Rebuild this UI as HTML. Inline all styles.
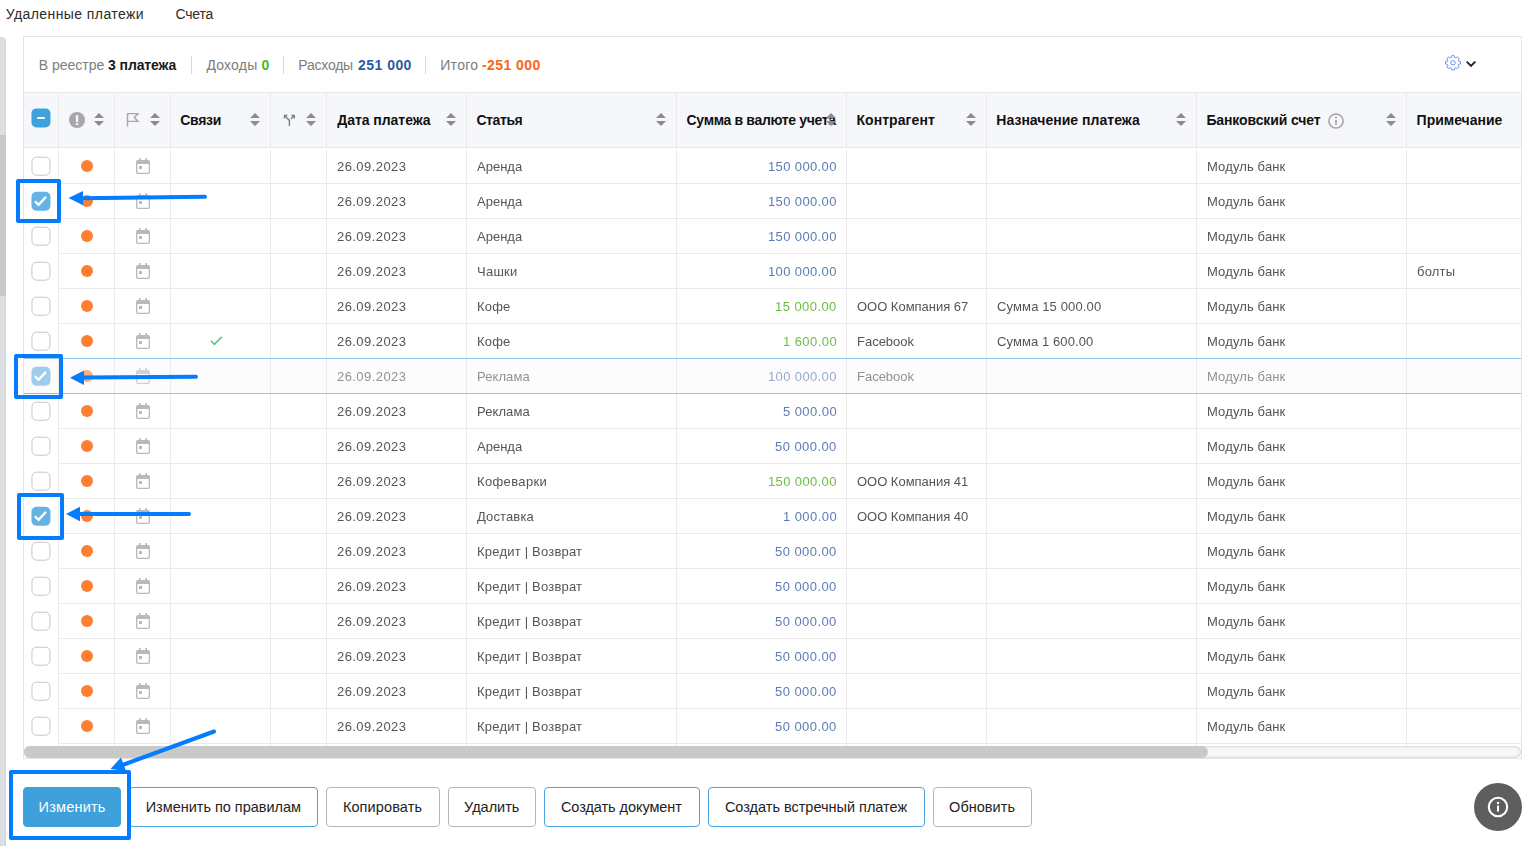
<!DOCTYPE html>
<html lang="ru">
<head>
<meta charset="utf-8">
<title>Реестр платежей</title>
<style>
*{box-sizing:border-box;margin:0;padding:0}
html,body{width:1538px;height:846px;overflow:hidden;background:#fff}
body{position:relative;font-family:"Liberation Sans",sans-serif;font-size:13px;color:#4a4a4a}
.abs{position:absolute}
.tab{position:absolute;top:6px;font-size:14px;color:#2b2b2b;line-height:16px;white-space:nowrap}
.strip{position:absolute;left:0;width:6px}
.panel{position:absolute;left:23px;top:36px;width:1499px;height:723px;border:1px solid #e4e4e4;background:#fff}
.thead{position:absolute;left:24px;top:92px;width:1497px;height:56px;background:#f6f7fb;border-top:1px solid #e6e7ec;border-bottom:1px solid #e6e7ec}
.vl{position:absolute;width:1px;background:#ebebeb}
.hl{position:absolute;height:1px;background:#ebebeb;left:59px;width:1462px}
.h{position:absolute;top:112px;font-weight:bold;font-size:14px;color:#111;line-height:16px;white-space:nowrap}
.c{position:absolute;white-space:nowrap;line-height:16px;font-size:13px;color:#555;will-change:transform}
.blue{color:#5b7db4}
.green{color:#6abf45}
.cb{position:absolute;left:31px;width:19px;height:19px;border:1.5px solid #c6c6c6;border-radius:5px;background:#fff;transform:translate(.45px,-.3px)}
.cb.on{border:none;background:#66b3e3}
.dot{position:absolute;left:81px;width:12px;height:12px;border-radius:50%;background:#ff7f32}
.btn{position:absolute;top:787px;height:40px;border-radius:4px;border:1px solid #b5b5b5;background:#fff}
.btn.pri{background:#3ea1dc;border-color:#3ea1dc}
.btn.bl{border-color:#4aa5e2}
.bt{position:absolute;top:799px;font-size:14.5px;line-height:16px;color:#222;white-space:nowrap}
.sum{position:absolute;top:57px;font-size:14px;line-height:16px;white-space:nowrap;color:#7d7d7d}
.sum.b{font-weight:bold}
.sep{position:absolute;top:56px;width:1px;height:18px;background:#d9d9d9}
.faded{opacity:.64}
svg{position:absolute;overflow:visible}
</style>
</head>
<body>

<div class="tab" style="left:5.7px;letter-spacing:0.42px">Удаленные платежи</div>
<div class="tab" style="left:175.4px;letter-spacing:-0.15px">Счета</div>
<div class="strip" style="top:37px;height:809px;background:linear-gradient(90deg,#d9dce0 0,#dfe2e5 60%,#cfd2d6 100%);border-radius:0 4px 0 0"></div>
<div class="strip" style="top:135px;height:161px;background:#c8c8c8"></div>
<div class="panel"></div>
<div class="sum" style="left:38.7px;letter-spacing:0px">В реестре</div>
<div class="sum b" style="left:108.1px;letter-spacing:-0.11px;color:#1a1a1a">3 платежа</div>
<div class="sep" style="left:191px"></div>
<div class="sum" style="left:206.4px;letter-spacing:0.2px">Доходы</div>
<div class="sum b" style="left:261.4px;letter-spacing:0px;color:#4fb81e">0</div>
<div class="sep" style="left:283px"></div>
<div class="sum" style="left:298.3px;letter-spacing:-0.23px">Расходы</div>
<div class="sum b" style="left:358.1px;letter-spacing:0.45px;color:#2c5aa5">251 000</div>
<div class="sep" style="left:425px"></div>
<div class="sum" style="left:440.2px;letter-spacing:0.32px">Итого</div>
<div class="sum b" style="left:481.9px;letter-spacing:0.43px;color:#fb6514">-251 000</div>
<svg style="left:1445.1px;top:55.4px" width="16" height="16" viewBox="0 0 16 16"><path d="M6.42 2.40 L6.75 0.68 L9.25 0.68 L9.58 2.40 L10.91 2.92 L12.41 1.92 L14.19 3.61 L13.14 5.04 L13.69 6.30 L15.50 6.61 L15.50 8.99 L13.69 9.30 L13.14 10.56 L14.19 11.99 L12.41 13.68 L10.91 12.68 L9.58 13.20 L9.25 14.92 L6.75 14.92 L6.42 13.20 L5.09 12.68 L3.59 13.68 L1.81 11.99 L2.86 10.56 L2.31 9.30 L0.50 8.99 L0.50 6.61 L2.31 6.30 L2.86 5.04 L1.81 3.61 L3.59 1.92 L5.09 2.92 Z" fill="none" stroke="#6488ff" stroke-width=".95" stroke-linejoin="round"/><ellipse cx="8" cy="7.8" rx="2.25" ry="2.15" fill="none" stroke="#6488ff" stroke-width=".95"/></svg>
<svg style="left:1465px;top:59px" width="12" height="10" viewBox="0 0 12 10"><path d="M1.7 2.6 L6 6.9 L10.3 2.6" fill="none" stroke="#222" stroke-width="1.9"/></svg>
<div class="thead"></div>
<div class="abs" style="left:31px;top:108px;width:19px;height:19px;border-radius:5px;background:#3ea1dc;transform:translate(.45px,.4px)"></div><div class="abs" style="left:37px;top:117px;width:8px;height:2px;background:#fff;border-radius:1px"></div>
<svg style="left:69px;top:112px" width="16" height="16" viewBox="0 0 16 16"><circle cx="8" cy="8" r="8" fill="#a8a8a8"/><rect x="6.9" y="3.1" width="2.3" height="7" fill="#f6f7fb"/><rect x="6.9" y="11.2" width="2.3" height="1.9" fill="#f6f7fb"/></svg>
<svg style="left:94px;top:113px" width="10" height="13" viewBox="0 0 10 13"><path d="M5 0 L10 5 L0 5 Z M0 8 L10 8 L5 13 Z" fill="#8b8b92"/></svg>
<svg style="left:125.9px;top:112.3px" width="14" height="15" viewBox="0 0 14 15"><path d="M1.5 14.6 V1.6 H12 L8.3 5.5 L12 9.4 H1.5" fill="none" stroke="#a8a8a8" stroke-width="1.4"/></svg>
<svg style="left:150px;top:113px" width="10" height="13" viewBox="0 0 10 13"><path d="M5 0 L10 5 L0 5 Z M0 8 L10 8 L5 13 Z" fill="#8b8b92"/></svg>
<div class="h" style="left:180.3px;letter-spacing:-0.3px">Связи</div>
<svg style="left:250px;top:113px" width="10" height="13" viewBox="0 0 10 13"><path d="M5 0 L10 5 L0 5 Z M0 8 L10 8 L5 13 Z" fill="#8b8b92"/></svg>
<svg style="left:281px;top:111.6px" width="16.8" height="16.8" viewBox="0 0 24 24"><path d="M14 4l2.29 2.29-2.88 2.88 1.42 1.42 2.88-2.88L20 10V4zm-4 0H4v6l2.29-2.29 4.71 4.7V20h2v-8.41l-5.29-5.3z" fill="#7b7e8a"/></svg>
<svg style="left:306px;top:113px" width="10" height="13" viewBox="0 0 10 13"><path d="M5 0 L10 5 L0 5 Z M0 8 L10 8 L5 13 Z" fill="#8b8b92"/></svg>
<div class="h" style="left:337.3px;letter-spacing:-0.05px">Дата платежа</div>
<svg style="left:446px;top:113px" width="10" height="13" viewBox="0 0 10 13"><path d="M5 0 L10 5 L0 5 Z M0 8 L10 8 L5 13 Z" fill="#8b8b92"/></svg>
<div class="h" style="left:476.4px;letter-spacing:-0.4px">Статья</div>
<svg style="left:656px;top:113px" width="10" height="13" viewBox="0 0 10 13"><path d="M5 0 L10 5 L0 5 Z M0 8 L10 8 L5 13 Z" fill="#8b8b92"/></svg>
<div class="h" style="left:686.6px;letter-spacing:-0.33px">Сумма в валюте учета</div>
<svg style="left:826px;top:113px" width="10" height="13" viewBox="0 0 10 13"><path d="M5 0 L10 5 L0 5 Z M0 8 L10 8 L5 13 Z" fill="#8b8b92"/></svg>
<div class="h" style="left:856.4px;letter-spacing:0.08px">Контрагент</div>
<svg style="left:966px;top:113px" width="10" height="13" viewBox="0 0 10 13"><path d="M5 0 L10 5 L0 5 Z M0 8 L10 8 L5 13 Z" fill="#8b8b92"/></svg>
<div class="h" style="left:996.3px;letter-spacing:0.02px">Назначение платежа</div>
<svg style="left:1176px;top:113px" width="10" height="13" viewBox="0 0 10 13"><path d="M5 0 L10 5 L0 5 Z M0 8 L10 8 L5 13 Z" fill="#8b8b92"/></svg>
<div class="h" style="left:1206.4px;letter-spacing:-0.11px">Банковский счет</div>
<svg style="left:1328px;top:112.5px" width="16" height="16" viewBox="0 0 16 16"><circle cx="8" cy="8" r="7.1" fill="none" stroke="#a2a2a2" stroke-width="1.5"/><rect x="7.2" y="6.8" width="1.6" height="5" fill="#a2a2a2"/><circle cx="8" cy="4.6" r="1" fill="#a2a2a2"/></svg>
<svg style="left:1386px;top:113px" width="10" height="13" viewBox="0 0 10 13"><path d="M5 0 L10 5 L0 5 Z M0 8 L10 8 L5 13 Z" fill="#8b8b92"/></svg>
<div class="h" style="left:1416.6px;letter-spacing:0px">Примечание</div>
<div class="vl" style="left:58px;top:93px;height:54px"></div>
<div class="vl" style="left:58px;top:149px;height:597px"></div>
<div class="vl" style="left:114px;top:93px;height:54px"></div>
<div class="vl" style="left:114px;top:149px;height:597px"></div>
<div class="vl" style="left:170px;top:93px;height:54px"></div>
<div class="vl" style="left:170px;top:149px;height:597px"></div>
<div class="vl" style="left:270px;top:93px;height:54px"></div>
<div class="vl" style="left:270px;top:149px;height:597px"></div>
<div class="vl" style="left:326px;top:93px;height:54px"></div>
<div class="vl" style="left:326px;top:149px;height:597px"></div>
<div class="vl" style="left:466px;top:93px;height:54px"></div>
<div class="vl" style="left:466px;top:149px;height:597px"></div>
<div class="vl" style="left:676px;top:93px;height:54px"></div>
<div class="vl" style="left:676px;top:149px;height:597px"></div>
<div class="vl" style="left:846px;top:93px;height:54px"></div>
<div class="vl" style="left:846px;top:149px;height:597px"></div>
<div class="vl" style="left:986px;top:93px;height:54px"></div>
<div class="vl" style="left:986px;top:149px;height:597px"></div>
<div class="vl" style="left:1196px;top:93px;height:54px"></div>
<div class="vl" style="left:1196px;top:149px;height:597px"></div>
<div class="vl" style="left:1406px;top:93px;height:54px"></div>
<div class="vl" style="left:1406px;top:149px;height:597px"></div>
<div class="hl" style="top:183px"></div>
<div class="cb" style="top:156.5px"></div>
<div class="dot" style="top:160px"></div>
<svg style="left:136px;top:158px" width="14" height="16" viewBox="0 0 14 16"><path d="M3 0 h1.6 v2 h4.8 v-2 h1.6 v2 h1 a2 2 0 0 1 2 2 v10 a2 2 0 0 1 -2 2 h-10 a2 2 0 0 1 -2 -2 v-10 a2 2 0 0 1 2 -2 h1 z M1.3 6 v7.9 a.8 .8 0 0 0 .8 .8 h9.8 a.8 .8 0 0 0 .8 -.8 v-7.9 z" fill="#b9b9b9" fill-rule="evenodd"/><rect x="3" y="8" width="3" height="3" fill="#b9b9b9"/></svg>
<div class="c" style="top:159px;left:336.9px;letter-spacing:0.43px">26.09.2023</div>
<div class="c" style="top:159px;left:477px;letter-spacing:0px">Аренда</div>
<div class="c blue" style="top:159px;left:767.5px;letter-spacing:0.37px">150 000.00</div>
<div class="c" style="top:159px;left:1206.9px;letter-spacing:0.13px">Модуль банк</div>
<div class="hl" style="top:218px"></div>
<div class="cb on" style="top:191.5px"></div><svg style="left:31.45px;top:191.2px" width="19" height="19" viewBox="0 0 19 19"><path d="M3.9 10.3 L7.5 13.8 L15 5.9" fill="none" stroke="#fff" stroke-width="2.3"/></svg>
<div class="dot" style="top:195px"></div>
<svg style="left:136px;top:193px" width="14" height="16" viewBox="0 0 14 16"><path d="M3 0 h1.6 v2 h4.8 v-2 h1.6 v2 h1 a2 2 0 0 1 2 2 v10 a2 2 0 0 1 -2 2 h-10 a2 2 0 0 1 -2 -2 v-10 a2 2 0 0 1 2 -2 h1 z M1.3 6 v7.9 a.8 .8 0 0 0 .8 .8 h9.8 a.8 .8 0 0 0 .8 -.8 v-7.9 z" fill="#b9b9b9" fill-rule="evenodd"/><rect x="3" y="8" width="3" height="3" fill="#b9b9b9"/></svg>
<div class="c" style="top:194px;left:336.9px;letter-spacing:0.43px">26.09.2023</div>
<div class="c" style="top:194px;left:477px;letter-spacing:0px">Аренда</div>
<div class="c blue" style="top:194px;left:767.5px;letter-spacing:0.37px">150 000.00</div>
<div class="c" style="top:194px;left:1206.9px;letter-spacing:0.13px">Модуль банк</div>
<div class="hl" style="top:253px"></div>
<div class="cb" style="top:226.5px"></div>
<div class="dot" style="top:230px"></div>
<svg style="left:136px;top:228px" width="14" height="16" viewBox="0 0 14 16"><path d="M3 0 h1.6 v2 h4.8 v-2 h1.6 v2 h1 a2 2 0 0 1 2 2 v10 a2 2 0 0 1 -2 2 h-10 a2 2 0 0 1 -2 -2 v-10 a2 2 0 0 1 2 -2 h1 z M1.3 6 v7.9 a.8 .8 0 0 0 .8 .8 h9.8 a.8 .8 0 0 0 .8 -.8 v-7.9 z" fill="#b9b9b9" fill-rule="evenodd"/><rect x="3" y="8" width="3" height="3" fill="#b9b9b9"/></svg>
<div class="c" style="top:229px;left:336.9px;letter-spacing:0.43px">26.09.2023</div>
<div class="c" style="top:229px;left:477px;letter-spacing:0px">Аренда</div>
<div class="c blue" style="top:229px;left:767.5px;letter-spacing:0.37px">150 000.00</div>
<div class="c" style="top:229px;left:1206.9px;letter-spacing:0.13px">Модуль банк</div>
<div class="hl" style="top:288px"></div>
<div class="cb" style="top:261.5px"></div>
<div class="dot" style="top:265px"></div>
<svg style="left:136px;top:263px" width="14" height="16" viewBox="0 0 14 16"><path d="M3 0 h1.6 v2 h4.8 v-2 h1.6 v2 h1 a2 2 0 0 1 2 2 v10 a2 2 0 0 1 -2 2 h-10 a2 2 0 0 1 -2 -2 v-10 a2 2 0 0 1 2 -2 h1 z M1.3 6 v7.9 a.8 .8 0 0 0 .8 .8 h9.8 a.8 .8 0 0 0 .8 -.8 v-7.9 z" fill="#b9b9b9" fill-rule="evenodd"/><rect x="3" y="8" width="3" height="3" fill="#b9b9b9"/></svg>
<div class="c" style="top:264px;left:336.9px;letter-spacing:0.43px">26.09.2023</div>
<div class="c" style="top:264px;left:477.4px;letter-spacing:0.25px">Чашки</div>
<div class="c blue" style="top:264px;left:767.5px;letter-spacing:0.37px">100 000.00</div>
<div class="c" style="top:264px;left:1206.9px;letter-spacing:0.13px">Модуль банк</div>
<div class="c" style="top:264px;left:1416.8px;letter-spacing:0.18px">болты</div>
<div class="hl" style="top:323px"></div>
<div class="cb" style="top:296.5px"></div>
<div class="dot" style="top:300px"></div>
<svg style="left:136px;top:298px" width="14" height="16" viewBox="0 0 14 16"><path d="M3 0 h1.6 v2 h4.8 v-2 h1.6 v2 h1 a2 2 0 0 1 2 2 v10 a2 2 0 0 1 -2 2 h-10 a2 2 0 0 1 -2 -2 v-10 a2 2 0 0 1 2 -2 h1 z M1.3 6 v7.9 a.8 .8 0 0 0 .8 .8 h9.8 a.8 .8 0 0 0 .8 -.8 v-7.9 z" fill="#b9b9b9" fill-rule="evenodd"/><rect x="3" y="8" width="3" height="3" fill="#b9b9b9"/></svg>
<div class="c" style="top:299px;left:336.9px;letter-spacing:0.43px">26.09.2023</div>
<div class="c" style="top:299px;left:477.1px;letter-spacing:0.17px">Кофе</div>
<div class="c green" style="top:299px;left:774.7px;letter-spacing:0.44px">15 000.00</div>
<div class="c" style="top:299px;left:856.7px;letter-spacing:-0.02px">ООО Компания 67</div>
<div class="c" style="top:299px;left:996.8px;letter-spacing:0.13px">Сумма 15 000.00</div>
<div class="c" style="top:299px;left:1206.9px;letter-spacing:0.13px">Модуль банк</div>
<div class="hl" style="top:358px"></div>
<div class="cb" style="top:331.5px"></div>
<div class="dot" style="top:335px"></div>
<svg style="left:136px;top:333px" width="14" height="16" viewBox="0 0 14 16"><path d="M3 0 h1.6 v2 h4.8 v-2 h1.6 v2 h1 a2 2 0 0 1 2 2 v10 a2 2 0 0 1 -2 2 h-10 a2 2 0 0 1 -2 -2 v-10 a2 2 0 0 1 2 -2 h1 z M1.3 6 v7.9 a.8 .8 0 0 0 .8 .8 h9.8 a.8 .8 0 0 0 .8 -.8 v-7.9 z" fill="#b9b9b9" fill-rule="evenodd"/><rect x="3" y="8" width="3" height="3" fill="#b9b9b9"/></svg>
<svg style="left:210px;top:336px" width="12" height="10" viewBox="0 0 12 10"><path d="M.9 4.8 L4.4 8.3 L11.8 .9" fill="none" stroke="#52c687" stroke-width="1.55"/></svg>
<div class="c" style="top:334px;left:336.9px;letter-spacing:0.43px">26.09.2023</div>
<div class="c" style="top:334px;left:477.1px;letter-spacing:0.17px">Кофе</div>
<div class="c green" style="top:334px;left:782.8px;letter-spacing:0.43px">1 600.00</div>
<div class="c" style="top:334px;left:857.1px;letter-spacing:-0.01px">Facebook</div>
<div class="c" style="top:334px;left:996.8px;letter-spacing:0.09px">Сумма 1 600.00</div>
<div class="c" style="top:334px;left:1206.9px;letter-spacing:0.13px">Модуль банк</div>
<div class="abs" style="left:24px;top:358px;width:1497px;height:36px;background:#fcfcfc;border-top:1px solid #8fc6ec;border-bottom:1px solid #8fc6ec"></div>
<div class="vl" style="left:58px;top:359px;height:34px"></div>
<div class="vl" style="left:114px;top:359px;height:34px"></div>
<div class="vl" style="left:170px;top:359px;height:34px"></div>
<div class="vl" style="left:270px;top:359px;height:34px"></div>
<div class="vl" style="left:326px;top:359px;height:34px"></div>
<div class="vl" style="left:466px;top:359px;height:34px"></div>
<div class="vl" style="left:676px;top:359px;height:34px"></div>
<div class="vl" style="left:846px;top:359px;height:34px"></div>
<div class="vl" style="left:986px;top:359px;height:34px"></div>
<div class="vl" style="left:1196px;top:359px;height:34px"></div>
<div class="vl" style="left:1406px;top:359px;height:34px"></div>
<div class="cb on faded" style="top:366.5px"></div><svg style="left:31.45px;top:366.2px" width="19" height="19" viewBox="0 0 19 19"><path d="M3.9 10.3 L7.5 13.8 L15 5.9" fill="none" stroke="#fff" stroke-width="2.3"/></svg>
<div class="dot faded" style="top:370px"></div>
<svg class="faded" style="left:136px;top:368px" width="14" height="16" viewBox="0 0 14 16"><path d="M3 0 h1.6 v2 h4.8 v-2 h1.6 v2 h1 a2 2 0 0 1 2 2 v10 a2 2 0 0 1 -2 2 h-10 a2 2 0 0 1 -2 -2 v-10 a2 2 0 0 1 2 -2 h1 z M1.3 6 v7.9 a.8 .8 0 0 0 .8 .8 h9.8 a.8 .8 0 0 0 .8 -.8 v-7.9 z" fill="#b9b9b9" fill-rule="evenodd"/><rect x="3" y="8" width="3" height="3" fill="#b9b9b9"/></svg>
<div class="c faded" style="top:369px;left:336.9px;letter-spacing:0.43px">26.09.2023</div>
<div class="c faded" style="top:369px;left:476.9px;letter-spacing:0.08px">Реклама</div>
<div class="c blue faded" style="top:369px;left:767.5px;letter-spacing:0.37px">100 000.00</div>
<div class="c faded" style="top:369px;left:857.1px;letter-spacing:-0.01px">Facebook</div>
<div class="c faded" style="top:369px;left:1206.9px;letter-spacing:0.13px">Модуль банк</div>
<div class="hl" style="top:428px"></div>
<div class="cb" style="top:401.5px"></div>
<div class="dot" style="top:405px"></div>
<svg style="left:136px;top:403px" width="14" height="16" viewBox="0 0 14 16"><path d="M3 0 h1.6 v2 h4.8 v-2 h1.6 v2 h1 a2 2 0 0 1 2 2 v10 a2 2 0 0 1 -2 2 h-10 a2 2 0 0 1 -2 -2 v-10 a2 2 0 0 1 2 -2 h1 z M1.3 6 v7.9 a.8 .8 0 0 0 .8 .8 h9.8 a.8 .8 0 0 0 .8 -.8 v-7.9 z" fill="#b9b9b9" fill-rule="evenodd"/><rect x="3" y="8" width="3" height="3" fill="#b9b9b9"/></svg>
<div class="c" style="top:404px;left:336.9px;letter-spacing:0.43px">26.09.2023</div>
<div class="c" style="top:404px;left:476.9px;letter-spacing:0.08px">Реклама</div>
<div class="c blue" style="top:404px;left:782.8px;letter-spacing:0.43px">5 000.00</div>
<div class="c" style="top:404px;left:1206.9px;letter-spacing:0.13px">Модуль банк</div>
<div class="hl" style="top:463px"></div>
<div class="cb" style="top:436.5px"></div>
<div class="dot" style="top:440px"></div>
<svg style="left:136px;top:438px" width="14" height="16" viewBox="0 0 14 16"><path d="M3 0 h1.6 v2 h4.8 v-2 h1.6 v2 h1 a2 2 0 0 1 2 2 v10 a2 2 0 0 1 -2 2 h-10 a2 2 0 0 1 -2 -2 v-10 a2 2 0 0 1 2 -2 h1 z M1.3 6 v7.9 a.8 .8 0 0 0 .8 .8 h9.8 a.8 .8 0 0 0 .8 -.8 v-7.9 z" fill="#b9b9b9" fill-rule="evenodd"/><rect x="3" y="8" width="3" height="3" fill="#b9b9b9"/></svg>
<div class="c" style="top:439px;left:336.9px;letter-spacing:0.43px">26.09.2023</div>
<div class="c" style="top:439px;left:477px;letter-spacing:0px">Аренда</div>
<div class="c blue" style="top:439px;left:774.7px;letter-spacing:0.44px">50 000.00</div>
<div class="c" style="top:439px;left:1206.9px;letter-spacing:0.13px">Модуль банк</div>
<div class="hl" style="top:498px"></div>
<div class="cb" style="top:471.5px"></div>
<div class="dot" style="top:475px"></div>
<svg style="left:136px;top:473px" width="14" height="16" viewBox="0 0 14 16"><path d="M3 0 h1.6 v2 h4.8 v-2 h1.6 v2 h1 a2 2 0 0 1 2 2 v10 a2 2 0 0 1 -2 2 h-10 a2 2 0 0 1 -2 -2 v-10 a2 2 0 0 1 2 -2 h1 z M1.3 6 v7.9 a.8 .8 0 0 0 .8 .8 h9.8 a.8 .8 0 0 0 .8 -.8 v-7.9 z" fill="#b9b9b9" fill-rule="evenodd"/><rect x="3" y="8" width="3" height="3" fill="#b9b9b9"/></svg>
<div class="c" style="top:474px;left:336.9px;letter-spacing:0.43px">26.09.2023</div>
<div class="c" style="top:474px;left:476.9px;letter-spacing:0.36px">Кофеварки</div>
<div class="c green" style="top:474px;left:767.5px;letter-spacing:0.37px">150 000.00</div>
<div class="c" style="top:474px;left:856.7px;letter-spacing:-0.02px">ООО Компания 41</div>
<div class="c" style="top:474px;left:1206.9px;letter-spacing:0.13px">Модуль банк</div>
<div class="hl" style="top:533px"></div>
<div class="cb on" style="top:506.5px"></div><svg style="left:31.45px;top:506.2px" width="19" height="19" viewBox="0 0 19 19"><path d="M3.9 10.3 L7.5 13.8 L15 5.9" fill="none" stroke="#fff" stroke-width="2.3"/></svg>
<div class="dot" style="top:510px"></div>
<svg style="left:136px;top:508px" width="14" height="16" viewBox="0 0 14 16"><path d="M3 0 h1.6 v2 h4.8 v-2 h1.6 v2 h1 a2 2 0 0 1 2 2 v10 a2 2 0 0 1 -2 2 h-10 a2 2 0 0 1 -2 -2 v-10 a2 2 0 0 1 2 -2 h1 z M1.3 6 v7.9 a.8 .8 0 0 0 .8 .8 h9.8 a.8 .8 0 0 0 .8 -.8 v-7.9 z" fill="#b9b9b9" fill-rule="evenodd"/><rect x="3" y="8" width="3" height="3" fill="#b9b9b9"/></svg>
<div class="c" style="top:509px;left:336.9px;letter-spacing:0.43px">26.09.2023</div>
<div class="c" style="top:509px;left:477px;letter-spacing:0.13px">Доставка</div>
<div class="c blue" style="top:509px;left:782.8px;letter-spacing:0.43px">1 000.00</div>
<div class="c" style="top:509px;left:856.7px;letter-spacing:-0.02px">ООО Компания 40</div>
<div class="c" style="top:509px;left:1206.9px;letter-spacing:0.13px">Модуль банк</div>
<div class="hl" style="top:568px"></div>
<div class="cb" style="top:541.5px"></div>
<div class="dot" style="top:545px"></div>
<svg style="left:136px;top:543px" width="14" height="16" viewBox="0 0 14 16"><path d="M3 0 h1.6 v2 h4.8 v-2 h1.6 v2 h1 a2 2 0 0 1 2 2 v10 a2 2 0 0 1 -2 2 h-10 a2 2 0 0 1 -2 -2 v-10 a2 2 0 0 1 2 -2 h1 z M1.3 6 v7.9 a.8 .8 0 0 0 .8 .8 h9.8 a.8 .8 0 0 0 .8 -.8 v-7.9 z" fill="#b9b9b9" fill-rule="evenodd"/><rect x="3" y="8" width="3" height="3" fill="#b9b9b9"/></svg>
<div class="c" style="top:544px;left:336.9px;letter-spacing:0.43px">26.09.2023</div>
<div class="c" style="top:544px;left:476.9px;letter-spacing:0.21px">Кредит | Возврат</div>
<div class="c blue" style="top:544px;left:774.7px;letter-spacing:0.44px">50 000.00</div>
<div class="c" style="top:544px;left:1206.9px;letter-spacing:0.13px">Модуль банк</div>
<div class="hl" style="top:603px"></div>
<div class="cb" style="top:576.5px"></div>
<div class="dot" style="top:580px"></div>
<svg style="left:136px;top:578px" width="14" height="16" viewBox="0 0 14 16"><path d="M3 0 h1.6 v2 h4.8 v-2 h1.6 v2 h1 a2 2 0 0 1 2 2 v10 a2 2 0 0 1 -2 2 h-10 a2 2 0 0 1 -2 -2 v-10 a2 2 0 0 1 2 -2 h1 z M1.3 6 v7.9 a.8 .8 0 0 0 .8 .8 h9.8 a.8 .8 0 0 0 .8 -.8 v-7.9 z" fill="#b9b9b9" fill-rule="evenodd"/><rect x="3" y="8" width="3" height="3" fill="#b9b9b9"/></svg>
<div class="c" style="top:579px;left:336.9px;letter-spacing:0.43px">26.09.2023</div>
<div class="c" style="top:579px;left:476.9px;letter-spacing:0.21px">Кредит | Возврат</div>
<div class="c blue" style="top:579px;left:774.7px;letter-spacing:0.44px">50 000.00</div>
<div class="c" style="top:579px;left:1206.9px;letter-spacing:0.13px">Модуль банк</div>
<div class="hl" style="top:638px"></div>
<div class="cb" style="top:611.5px"></div>
<div class="dot" style="top:615px"></div>
<svg style="left:136px;top:613px" width="14" height="16" viewBox="0 0 14 16"><path d="M3 0 h1.6 v2 h4.8 v-2 h1.6 v2 h1 a2 2 0 0 1 2 2 v10 a2 2 0 0 1 -2 2 h-10 a2 2 0 0 1 -2 -2 v-10 a2 2 0 0 1 2 -2 h1 z M1.3 6 v7.9 a.8 .8 0 0 0 .8 .8 h9.8 a.8 .8 0 0 0 .8 -.8 v-7.9 z" fill="#b9b9b9" fill-rule="evenodd"/><rect x="3" y="8" width="3" height="3" fill="#b9b9b9"/></svg>
<div class="c" style="top:614px;left:336.9px;letter-spacing:0.43px">26.09.2023</div>
<div class="c" style="top:614px;left:476.9px;letter-spacing:0.21px">Кредит | Возврат</div>
<div class="c blue" style="top:614px;left:774.7px;letter-spacing:0.44px">50 000.00</div>
<div class="c" style="top:614px;left:1206.9px;letter-spacing:0.13px">Модуль банк</div>
<div class="hl" style="top:673px"></div>
<div class="cb" style="top:646.5px"></div>
<div class="dot" style="top:650px"></div>
<svg style="left:136px;top:648px" width="14" height="16" viewBox="0 0 14 16"><path d="M3 0 h1.6 v2 h4.8 v-2 h1.6 v2 h1 a2 2 0 0 1 2 2 v10 a2 2 0 0 1 -2 2 h-10 a2 2 0 0 1 -2 -2 v-10 a2 2 0 0 1 2 -2 h1 z M1.3 6 v7.9 a.8 .8 0 0 0 .8 .8 h9.8 a.8 .8 0 0 0 .8 -.8 v-7.9 z" fill="#b9b9b9" fill-rule="evenodd"/><rect x="3" y="8" width="3" height="3" fill="#b9b9b9"/></svg>
<div class="c" style="top:649px;left:336.9px;letter-spacing:0.43px">26.09.2023</div>
<div class="c" style="top:649px;left:476.9px;letter-spacing:0.21px">Кредит | Возврат</div>
<div class="c blue" style="top:649px;left:774.7px;letter-spacing:0.44px">50 000.00</div>
<div class="c" style="top:649px;left:1206.9px;letter-spacing:0.13px">Модуль банк</div>
<div class="hl" style="top:708px"></div>
<div class="cb" style="top:681.5px"></div>
<div class="dot" style="top:685px"></div>
<svg style="left:136px;top:683px" width="14" height="16" viewBox="0 0 14 16"><path d="M3 0 h1.6 v2 h4.8 v-2 h1.6 v2 h1 a2 2 0 0 1 2 2 v10 a2 2 0 0 1 -2 2 h-10 a2 2 0 0 1 -2 -2 v-10 a2 2 0 0 1 2 -2 h1 z M1.3 6 v7.9 a.8 .8 0 0 0 .8 .8 h9.8 a.8 .8 0 0 0 .8 -.8 v-7.9 z" fill="#b9b9b9" fill-rule="evenodd"/><rect x="3" y="8" width="3" height="3" fill="#b9b9b9"/></svg>
<div class="c" style="top:684px;left:336.9px;letter-spacing:0.43px">26.09.2023</div>
<div class="c" style="top:684px;left:476.9px;letter-spacing:0.21px">Кредит | Возврат</div>
<div class="c blue" style="top:684px;left:774.7px;letter-spacing:0.44px">50 000.00</div>
<div class="c" style="top:684px;left:1206.9px;letter-spacing:0.13px">Модуль банк</div>
<div class="hl" style="top:743px"></div>
<div class="cb" style="top:716.5px"></div>
<div class="dot" style="top:720px"></div>
<svg style="left:136px;top:718px" width="14" height="16" viewBox="0 0 14 16"><path d="M3 0 h1.6 v2 h4.8 v-2 h1.6 v2 h1 a2 2 0 0 1 2 2 v10 a2 2 0 0 1 -2 2 h-10 a2 2 0 0 1 -2 -2 v-10 a2 2 0 0 1 2 -2 h1 z M1.3 6 v7.9 a.8 .8 0 0 0 .8 .8 h9.8 a.8 .8 0 0 0 .8 -.8 v-7.9 z" fill="#b9b9b9" fill-rule="evenodd"/><rect x="3" y="8" width="3" height="3" fill="#b9b9b9"/></svg>
<div class="c" style="top:719px;left:336.9px;letter-spacing:0.43px">26.09.2023</div>
<div class="c" style="top:719px;left:476.9px;letter-spacing:0.21px">Кредит | Возврат</div>
<div class="c blue" style="top:719px;left:774.7px;letter-spacing:0.44px">50 000.00</div>
<div class="c" style="top:719px;left:1206.9px;letter-spacing:0.13px">Модуль банк</div>
<div class="abs" style="left:24px;top:746px;width:1497px;height:12px;border-radius:6px;background:#f7f7f7;box-shadow:inset 0 0 3px rgba(0,0,0,.25)"></div>
<div class="abs" style="left:24px;top:746px;width:1184px;height:12px;border-radius:6px;background:#c9c9c9"></div>
<div class="btn pri" style="left:23px;width:98px"></div>
<div class="bt" style="left:38.5px;letter-spacing:0.21px;color:#fff">Изменить</div>
<div class="btn bl" style="left:129px;width:189px"></div>
<div class="bt" style="left:145.7px;letter-spacing:-0.02px">Изменить по правилам</div>
<div class="btn " style="left:326px;width:114px"></div>
<div class="bt" style="left:342.9px;letter-spacing:0.11px">Копировать</div>
<div class="btn " style="left:448px;width:88px"></div>
<div class="bt" style="left:464.1px;letter-spacing:-0.02px">Удалить</div>
<div class="btn bl" style="left:544px;width:156px"></div>
<div class="bt" style="left:560.9px;letter-spacing:-0.06px">Создать документ</div>
<div class="btn bl" style="left:708px;width:217px"></div>
<div class="bt" style="left:724.9px;letter-spacing:-0.01px">Создать встречный платеж</div>
<div class="btn " style="left:933px;width:99px"></div>
<div class="bt" style="left:949.1px;letter-spacing:0.03px">Обновить</div>
<div class="abs" style="left:1474px;top:783px;width:48px;height:48px;border-radius:50%;background:#5e5e5e"></div>
<svg style="left:1488px;top:797px" width="20" height="20" viewBox="0 0 20 20"><circle cx="10" cy="10" r="9.2" fill="none" stroke="#fff" stroke-width="2.1"/><rect x="9" y="8.6" width="2" height="6" fill="#fff"/><circle cx="10" cy="6" r="1.2" fill="#fff"/></svg>
<div class="abs" style="left:16px;top:179px;width:45px;height:44px;border:4px solid #047cfc;border-radius:2px"></div>
<div class="abs" style="left:14px;top:354px;width:49px;height:45px;border:4px solid #047cfc;border-radius:2px"></div>
<div class="abs" style="left:17px;top:493px;width:47px;height:47px;border:4px solid #047cfc;border-radius:2px"></div>
<div class="abs" style="left:9px;top:770px;width:122px;height:70px;border:4px solid #047cfc;border-radius:2px"></div>
<svg style="left:0;top:0" width="1538" height="846" viewBox="0 0 1538 846"><g stroke="#047cfc" stroke-width="4" stroke-linecap="round" fill="#047cfc"><line x1="82" y1="198.3" x2="205" y2="196.8"/><path d="M68.5 198 L83 191 L83 205.3 Z" stroke="none"/><line x1="83" y1="377.6" x2="196" y2="376.8"/><path d="M70 377.8 L84 370.6 L84 385 Z" stroke="none"/><line x1="79" y1="514" x2="189" y2="514"/><path d="M66 514 L80 506.7 L80 521.2 Z" stroke="none"/><line x1="124" y1="764.5" x2="214" y2="731.5"/><path d="M110.5 769 L121 757.4 L126 771 Z" stroke="none"/></g></svg>
</body>
</html>
